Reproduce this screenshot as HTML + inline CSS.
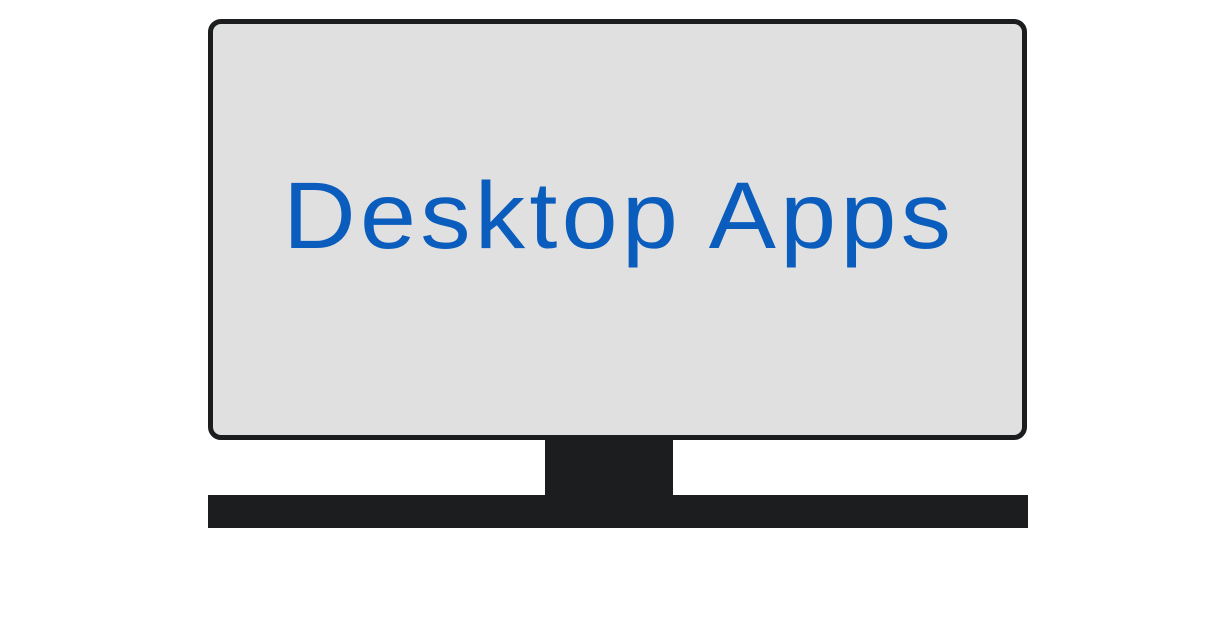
<!DOCTYPE html>
<html><head><meta charset="utf-8"><style>
html,body{margin:0;padding:0;background:#fff;width:1226px;height:629px;overflow:hidden;position:relative}
.mon{position:absolute;left:208px;top:19px;width:809px;height:411px;border:5.5px solid #1c1d1f;border-radius:13px;background:#e0e0e0}
.neck{position:absolute;left:545px;top:439px;width:128px;height:57px;background:#1c1d1f}
.base{position:absolute;left:208px;top:495px;width:820px;height:33px;background:#1c1d1f}
.t{position:absolute;left:283px;top:161px;font-family:"Liberation Sans",sans-serif;font-size:95px;line-height:110px;color:#0b5dbd;letter-spacing:4px;white-space:nowrap;transform:scaleX(1.06);transform-origin:0 0}
</style></head><body>
<div class="mon"></div>
<div class="neck"></div>
<div class="base"></div>
<div class="t">Desktop Apps</div>
</body></html>
